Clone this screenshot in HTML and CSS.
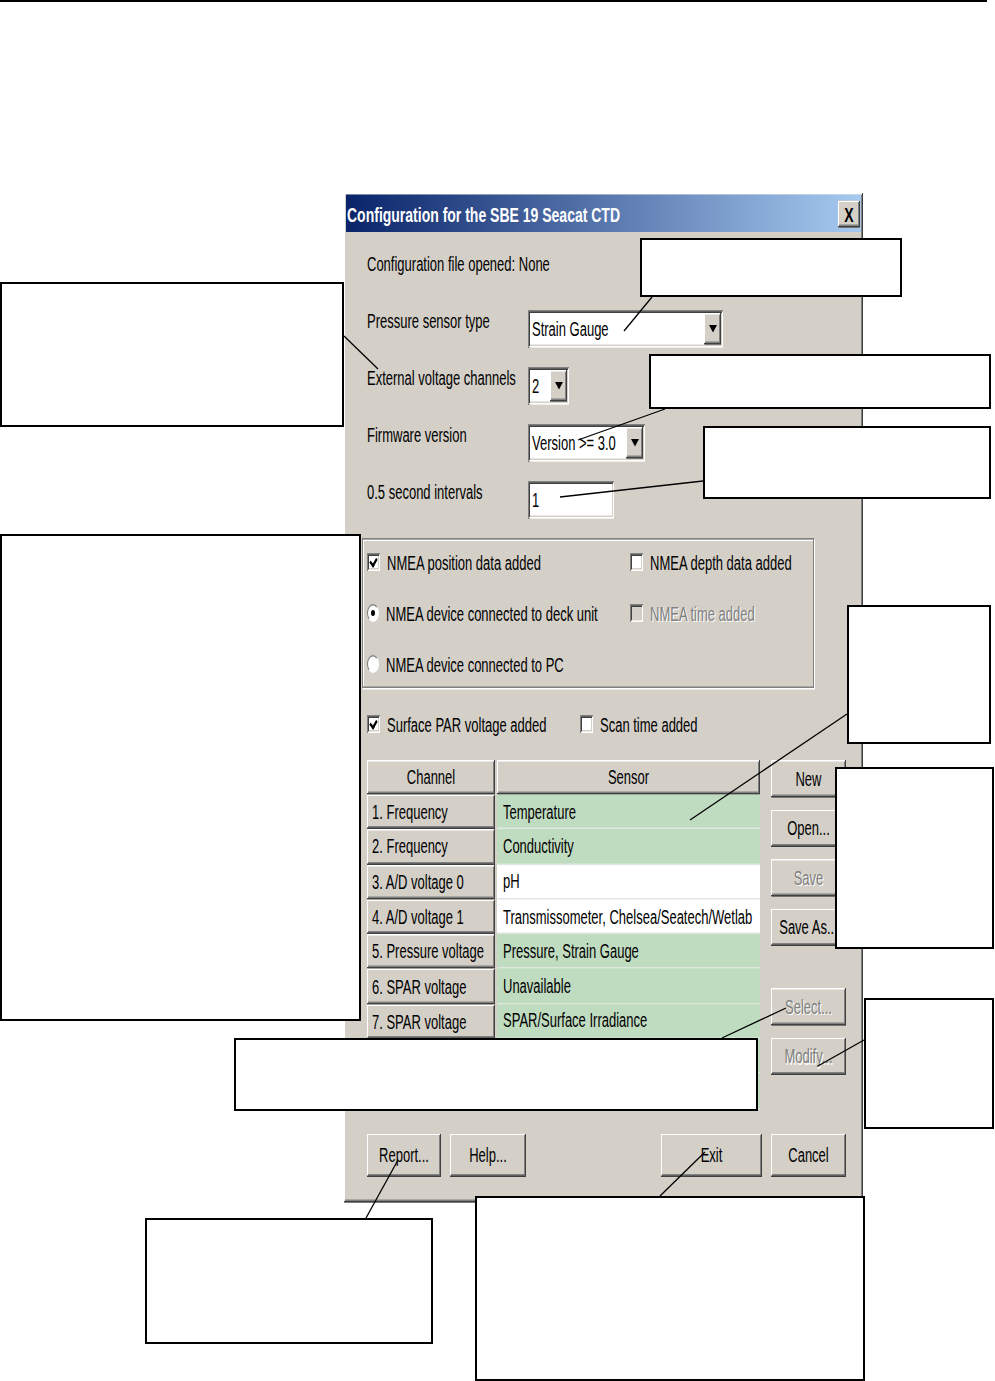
FILE: index.html
```html
<!DOCTYPE html>
<html lang="en">
<head>
    <meta charset="UTF-8">
    <title>Configuration for the SBE 19 Seacat CTD</title>
    <link rel="stylesheet" href="styles.css">
</head>
<body>
<div class="page">
    <div class="top-rule"></div>

    <div class="dialog">
        <div class="titlebar">
            <span class="title">Configuration for the SBE 19 Seacat CTD</span>
            <div class="close-btn">X</div>
        </div>

        <div class="dialog-body">
            <div class="file-info">Configuration file opened: None</div>

            <div class="settings">
                <span class="setting-label">Pressure sensor type</span>
                <div class="combo combo-pressure"><span class="combo-value">Strain Gauge</span><span class="combo-arrow"></span></div>
                <span class="setting-label">External voltage channels</span>
                <div class="combo combo-channels"><span class="combo-value">2</span><span class="combo-arrow"></span></div>
                <span class="setting-label">Firmware version</span>
                <div class="combo combo-firmware"><span class="combo-value">Version &gt;= 3.0</span><span class="combo-arrow"></span></div>
                <span class="setting-label">0.5 second intervals</span>
                <div class="combo combo-interval"><span class="combo-value">1</span></div>
            </div>

            <div class="nmea-group">
                <div class="option"><span class="check checked"></span>NMEA position data added</div>
                <div class="option"><span class="check"></span>NMEA depth data added</div>
                <div class="option"><span class="radio selected"></span>NMEA device connected to deck unit</div>
                <div class="option disabled"><span class="check"></span>NMEA time added</div>
                <div class="option"><span class="radio"></span>NMEA device connected to PC</div>
            </div>

            <div class="extras">
                <div class="option surface-par"><span class="check checked"></span>Surface PAR voltage added</div>
                <div class="option"><span class="check"></span>Scan time added</div>
            </div>

            <div class="sensor-area">
                <div class="sensor-table">
                    <div class="head-cell">Channel</div>
                    <div class="head-cell">Sensor</div>
                    <div class="channel-cell">1. Frequency</div>
                    <div class="sensor-cell">Temperature</div>
                    <div class="channel-cell">2. Frequency</div>
                    <div class="sensor-cell">Conductivity</div>
                    <div class="channel-cell">3. A/D voltage 0</div>
                    <div class="sensor-cell plain">pH</div>
                    <div class="channel-cell">4. A/D voltage 1</div>
                    <div class="sensor-cell plain">Transmissometer, Chelsea/Seatech/Wetlab</div>
                    <div class="channel-cell">5. Pressure voltage</div>
                    <div class="sensor-cell">Pressure, Strain Gauge</div>
                    <div class="channel-cell">6. SPAR voltage</div>
                    <div class="sensor-cell">Unavailable</div>
                    <div class="channel-cell">7. SPAR voltage</div>
                    <div class="sensor-cell">SPAR/Surface Irradiance</div>
                    <div class="channel-cell"></div>
                    <div class="sensor-cell"></div>
                    <div class="channel-cell"></div>
                    <div class="sensor-cell"></div>
                </div>
                <div class="side-buttons">
                    <div class="btn">New</div>
                    <div class="btn">Open...</div>
                    <div class="btn disabled">Save</div>
                    <div class="btn">Save As...</div>
                    <div class="btn disabled btn-select">Select...</div>
                    <div class="btn disabled">Modify...</div>
                </div>
            </div>

            <div class="bottom-buttons">
                <div class="btn-group">
                    <div class="btn btn-report">Report...</div>
                    <div class="btn btn-help">Help...</div>
                </div>
                <div class="btn-group">
                    <div class="btn btn-exit">Exit</div>
                    <div class="btn btn-cancel">Cancel</div>
                </div>
            </div>
        </div>
    </div>

    <!-- leader lines from the callouts to the dialog -->
    <svg class="leaders" width="995" height="1381" viewBox="0 0 995 1381">
        <line x1="652" y1="297" x2="624" y2="331"/>
        <line x1="344" y1="336" x2="378" y2="369"/>
        <line x1="665" y1="409" x2="578" y2="440"/>
        <line x1="703" y1="481" x2="560" y2="497"/>
        <line x1="847" y1="714" x2="690" y2="820"/>
        <line x1="864" y1="1040" x2="818" y2="1066"/>
        <line x1="722" y1="1038" x2="786" y2="1008"/>
        <line x1="366" y1="1218" x2="398" y2="1160"/>
        <line x1="660" y1="1196" x2="705" y2="1152"/>
    </svg>

    <div class="callout callout-pressure"></div>
    <div class="callout callout-channels"></div>
    <div class="callout callout-firmware"></div>
    <div class="callout callout-interval"></div>
    <div class="callout callout-nmea"></div>
    <div class="callout callout-sensor"></div>
    <div class="callout callout-files"></div>
    <div class="callout callout-modify"></div>
    <div class="callout callout-select"></div>
    <div class="callout callout-report"></div>
    <div class="callout callout-exit"></div>
</div>
</body>
</html>
```

FILE: styles.css
```css
body {
    margin: 0;
    background-color: #ffffff;
    font-family: "Liberation Sans", Arial, sans-serif;
}
.page {
    position: relative;
    width: 995px;
    height: 1381px;
    overflow: hidden;
}
.top-rule {
    width: 987px;
    height: 2px;
    background-color: #000000;
}

/* the dialog is laid out flat, then stretched like the screenshot */
.dialog {
    width: 519px;
    height: 673px;
    margin: 191px 0 0 344px;
    padding: 1px 2px 0;
    box-sizing: border-box;
    background-color: #d4d0c8;
    box-shadow: inset -1px -1px #404040, inset 1px 1px #ffffff, inset -2px -2px #808080;
    transform: scaleY(1.5);
    transform-origin: top left;
    font-size: 13px;
    color: #000000;
}
.titlebar {
    height: 25px;
    display: flex;
    align-items: center;
    justify-content: space-between;
    padding: 0 1px;
    background: linear-gradient(to right, #0a246a, #a6caf0);
}
.title {
    color: #ffffff;
    font-weight: bold;
    font-size: 14px;
    white-space: nowrap;
}
.close-btn {
    width: 22px;
    height: 18px;
    display: flex;
    align-items: center;
    justify-content: center;
    background-color: #d4d0c8;
    box-shadow: inset -1px -1px #404040, inset 1px 1px #ffffff, inset -2px -2px #808080;
    font-weight: bold;
    font-size: 14px;
}
.dialog-body {
    padding: 14px 15px 0 21px;
}
.file-info {
    height: 16px;
    line-height: 16px;
}
.settings {
    display: grid;
    grid-template-columns: 161px auto;
    grid-auto-rows: 25px;
    row-gap: 13px;
    align-items: center;
    justify-items: start;
    margin-top: 22px;
}
.setting-label {
    align-self: start;
    line-height: 16px;
}
.combo {
    height: 25px;
    display: flex;
    align-items: center;
    justify-content: space-between;
    padding: 2px;
    box-sizing: border-box;
    background-color: #ffffff;
    box-shadow: inset 1px 1px #808080, inset -1px -1px #ffffff, inset 2px 2px #404040, inset -2px -2px #d4d0c8;
}
.combo-value {
    padding-left: 2px;
    white-space: nowrap;
}
.combo-arrow {
    width: 17px;
    height: 21px;
    display: flex;
    align-items: center;
    justify-content: center;
    background-color: #d4d0c8;
    box-shadow: inset -1px -1px #404040, inset 1px 1px #ffffff, inset -2px -2px #808080;
}
.combo-arrow::after {
    content: "";
    border-left: 4px solid transparent;
    border-right: 4px solid transparent;
    border-top: 5px solid #000000;
}
.combo-pressure { width: 195px; }
.combo-channels { width: 41px; }
.combo-firmware { width: 117px; }
.combo-interval { width: 86px; }

.nmea-group {
    width: 452px;
    height: 100px;
    margin: 13px 0 0 -5px;
    padding: 8px 0 0 4px;
    box-sizing: border-box;
    border: 1px solid #808080;
    box-shadow: 1px 1px 0 #ffffff, inset 1px 1px 0 #ffffff;
    display: grid;
    grid-template-columns: 263px auto;
    grid-auto-rows: 14px;
    row-gap: 20px;
}
.option {
    display: flex;
    align-items: center;
    gap: 7px;
    white-space: nowrap;
}
.option.disabled {
    color: #808080;
    text-shadow: 1px 1px #ffffff;
}
.check {
    width: 13px;
    height: 12px;
    flex-shrink: 0;
    position: relative;
    background-color: #ffffff;
    box-shadow: inset 1px 1px #808080, inset -1px -1px #ffffff, inset 2px 2px #404040, inset -2px -2px #d4d0c8;
}
.option.disabled .check {
    background-color: #d4d0c8;
}
.check.checked::after {
    content: "";
    position: absolute;
    left: 4px;
    top: 2px;
    width: 3px;
    height: 5px;
    border-right: 2px solid #000000;
    border-bottom: 2px solid #000000;
    transform: rotate(40deg);
}
.radio {
    width: 12px;
    height: 12px;
    flex-shrink: 0;
    border-radius: 50%;
    box-sizing: border-box;
    background-color: #ffffff;
    border: 1px solid;
    border-color: #808080 #ffffff #ffffff #808080;
    display: flex;
    align-items: center;
    justify-content: center;
}
.radio.selected::after {
    content: "";
    width: 4px;
    height: 4px;
    border-radius: 50%;
    background-color: #000000;
}

.extras {
    display: flex;
    height: 14px;
    margin-top: 17px;
}
.surface-par {
    width: 213px;
}

.sensor-area {
    display: flex;
    gap: 11px;
    height: 233px;
    margin-top: 17px;
}
.sensor-table {
    display: grid;
    grid-template-columns: 128px 263px;
    grid-template-rows: 23px;
    grid-auto-rows: 23.3px;
    column-gap: 2px;
    overflow: hidden;
}
.head-cell,
.channel-cell {
    display: flex;
    align-items: center;
    background-color: #d4d0c8;
    box-shadow: inset -1px -1px #404040, inset 1px 1px #ffffff, inset -2px -2px #808080;
    white-space: nowrap;
}
.head-cell {
    justify-content: center;
}
.channel-cell {
    padding-left: 5px;
}
.sensor-cell {
    display: flex;
    align-items: center;
    padding-left: 6px;
    background-color: #c0dcc0;
    border-bottom: 1px solid #dde9dd;
    white-space: nowrap;
}
.sensor-cell.plain {
    background-color: #ffffff;
    border-bottom-color: #e4e4e4;
}
.side-buttons {
    display: flex;
    flex-direction: column;
    gap: 8px;
    width: 75px;
}
.btn {
    height: 25px;
    display: flex;
    align-items: center;
    justify-content: center;
    flex-shrink: 0;
    background-color: #d4d0c8;
    box-shadow: inset -1px -1px #404040, inset 1px 1px #ffffff, inset -2px -2px #808080;
    white-space: nowrap;
}
.btn.disabled {
    color: #808080;
    text-shadow: 1px 1px #ffffff;
}
.btn-select {
    margin-top: 20px;
}
.bottom-buttons {
    display: flex;
    justify-content: space-between;
    margin-top: 16px;
}
.btn-group {
    display: flex;
    gap: 9px;
}
.bottom-buttons .btn {
    height: 29px;
}
.btn-report { width: 74px; }
.btn-help { width: 76px; }
.btn-exit { width: 101px; }
.btn-cancel { width: 75px; }

/* callout overlay */
.leaders {
    position: absolute;
    left: 0;
    top: 0;
    stroke: #000000;
    stroke-width: 1.3;
}
.callout {
    position: absolute;
    background-color: #ffffff;
    border: 2px solid #000000;
    box-sizing: border-box;
}
.callout-pressure { left: 640px; top: 238px; width: 262px; height: 59px; }
.callout-channels { left: 0; top: 282px; width: 344px; height: 145px; }
.callout-firmware { left: 649px; top: 354px; width: 342px; height: 55px; }
.callout-interval { left: 703px; top: 426px; width: 288px; height: 73px; }
.callout-nmea { left: 0; top: 534px; width: 361px; height: 487px; }
.callout-sensor { left: 847px; top: 605px; width: 144px; height: 139px; }
.callout-files { left: 835px; top: 767px; width: 159px; height: 182px; }
.callout-modify { left: 864px; top: 998px; width: 130px; height: 131px; }
.callout-select { left: 234px; top: 1038px; width: 524px; height: 73px; }
.callout-report { left: 145px; top: 1218px; width: 288px; height: 126px; }
.callout-exit { left: 475px; top: 1196px; width: 390px; height: 185px; }
```
